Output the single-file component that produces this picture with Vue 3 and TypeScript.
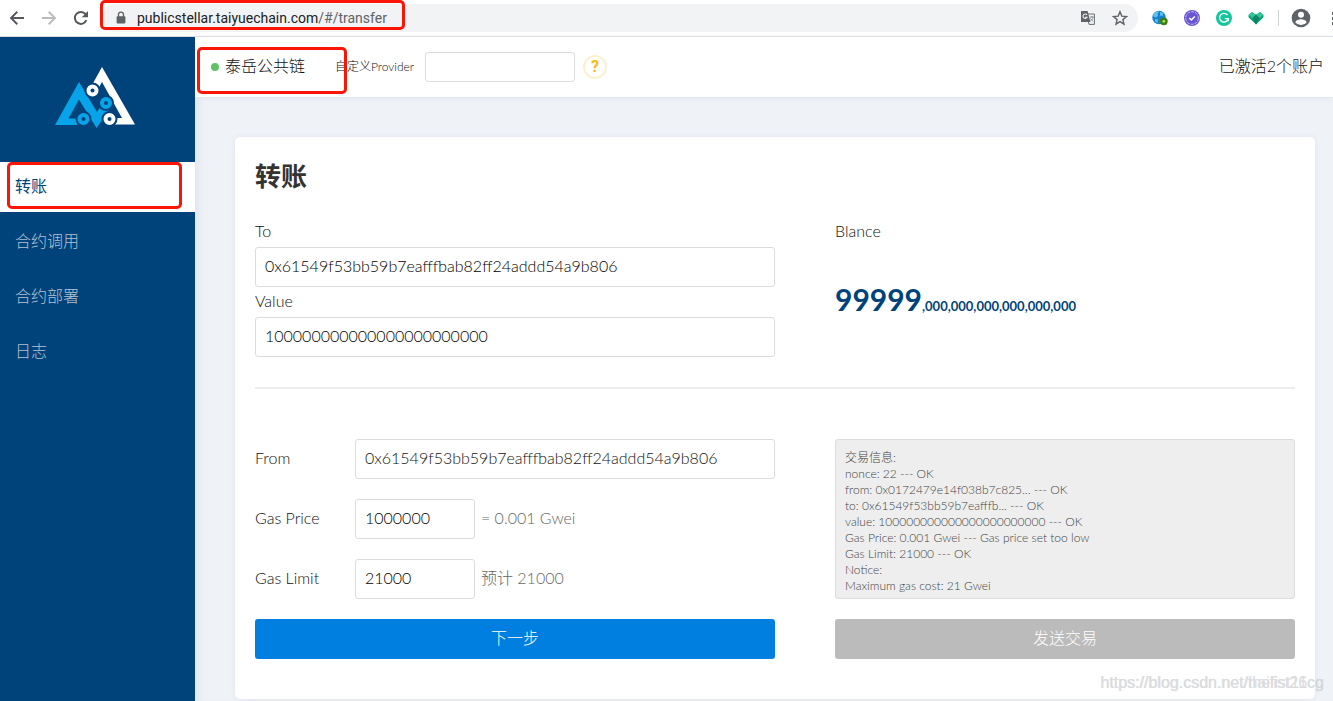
<script setup lang="ts">
import { ref } from 'vue'

interface NavItem {
  label: string
  active: boolean
}

const navItems: NavItem[] = [
  { label: '转账', active: true },
  { label: '合约调用', active: false },
  { label: '合约部署', active: false },
  { label: '日志', active: false },
]

const provider = ref('')
const to = ref('0x61549f53bb59b7eafffbab82ff24addd54a9b806')
const amount = ref('100000000000000000000000')
const from = ref('0x61549f53bb59b7eafffbab82ff24addd54a9b806')
const gasPrice = ref('1000000')
const gasLimit = ref('21000')

const infoLines: string[] = [
  '交易信息:',
  'nonce: 22 --- OK',
  'from: 0x0172479e14f038b7c825... --- OK',
  'to: 0x61549f53bb59b7eafffb... --- OK',
  'value: 100000000000000000000000 --- OK',
  'Gas Price: 0.001 Gwei --- Gas price set too low',
  'Gas Limit: 21000 --- OK',
  'Notice:',
  'Maximum gas cost: 21 Gwei',
]
</script>

<template>
  <div class="window">
    <div class="browser">
      <button class="tool" aria-label="Back">
        <svg width="16" height="16" viewBox="0 0 16 16"><path d="M15 8H2.5M8.3 1.8 2 8l6.3 6.2" fill="none" stroke="#55585d" stroke-width="1.9" /></svg>
      </button>
      <button class="tool" aria-label="Forward">
        <svg width="16" height="16" viewBox="0 0 16 16"><path d="M1 8h12.5M7.7 1.8 14 8l-6.3 6.2" fill="none" stroke="#b9bbbe" stroke-width="1.9" /></svg>
      </button>
      <button class="tool" aria-label="Reload">
        <svg width="16" height="16" viewBox="0 0 16 16"><path d="M13.4 10.2A6 6 0 1 1 12.6 4.2" fill="none" stroke="#55585d" stroke-width="2" /><path d="M15 1v6.2H8.8z" fill="#55585d" /></svg>
      </button>
      <div class="address">
        <svg class="lock" width="10" height="14" viewBox="0 0 10 14"><path d="M2.5 6V3.6a2.5 2.5 0 0 1 5 0V6" fill="none" stroke="#5f6368" stroke-width="1.3" /><rect x="0.6" y="5.2" width="8.8" height="7.4" rx="1" fill="#5f6368" /></svg>
        <span class="url">publicstellar.taiyuechain.com<span class="path">/#/transfer</span></span>
        <button class="tool" aria-label="Translate">
          <svg width="16" height="16" viewBox="0 0 16 16"><path d="M7 4h7.4v10.4H9z" fill="#f1f3f4" stroke="#6a6d72" stroke-width="1" /><path d="M1 1h6.6l2.8 11H1z" fill="#5f6368" /><path d="M7 4.9A2.2 2.2 0 1 0 7.1 7.3H5.2" fill="none" stroke="#f1f3f4" stroke-width="1.1" /><path d="M9.8 7h4M11.8 6v1M13 7c-.4 2-1.5 3.2-2.6 4M10.4 8.4c.5 1.1 1.6 2.2 2.8 2.8" fill="none" stroke="#85888c" stroke-width="0.9" /></svg>
        </button>
        <button class="tool" aria-label="Bookmark">
          <svg width="16" height="16" viewBox="0 0 16 16"><path d="m8 1.7 1.8 4.4 4.7.4-3.6 3.1 1.1 4.6L8 11.7l-4 2.5 1.1-4.6L1.5 6.5l4.7-.4z" fill="none" stroke="#5f6368" stroke-width="1.4" /></svg>
        </button>
      </div>
      <button class="tool" aria-label="Globe extension">
        <svg width="16" height="16" viewBox="0 0 16 16"><circle cx="7" cy="7.5" r="6.7" fill="#1583cf" /><path d="M2 3.5C4 1 6 1 7 1.5L5.5 4 6 6 3.5 7.5 1 6zM8 2l3.5 1-1 3-2.5-.5zM3 9l3 .5L5.500 13 3 11.500z" fill="#62c0ef" /><circle cx="11.8" cy="11.3" r="3.9" fill="#3b7e13" /><circle cx="11.8" cy="11.3" r="1.4" fill="#b7dc54" /></svg>
      </button>
      <button class="tool" aria-label="Badge extension">
        <svg width="16" height="16" viewBox="0 0 16 16"><circle cx="8" cy="8" r="8" fill="#6855cf" /><circle cx="8" cy="8" r="6.3" fill="none" stroke="#c8bff3" stroke-width="1" stroke-dasharray="3 1" /><path d="m5.300 8 2 2 3.500-3.600" fill="none" stroke="#fff" stroke-width="1.5" /></svg>
      </button>
      <button class="tool" aria-label="Grammar extension">
        <svg width="16" height="16" viewBox="0 0 16 16"><circle cx="8" cy="8" r="8" fill="#11c79b" /><path d="M11.500 5A4.400 4.400 0 1 0 12.300 8.700H8.800M12.300 8.700v2.600" fill="none" stroke="#fff" stroke-width="1.3" /></svg>
      </button>
      <button class="tool" aria-label="Heart extension">
        <svg width="16" height="16" viewBox="0 0 16 16"><path d="M.5 5 4 2l4 2.800L12 2l3.500 3v2.200L8 14.500.5 7.200z" fill="#08a67c" /><path d="M.5 5 4 2l4 2.800L4.500 8zM12 2l3.500 3-4 3L8 4.800z" fill="#35c398" /><path d="M4.500 8 8 4.800 11.500 8 8 14.500z" fill="#098663" /></svg>
      </button>
      <span class="divider"></span>
      <button class="tool profile" aria-label="Profile">
        <svg width="20" height="20" viewBox="0 0 20 20"><circle cx="10" cy="10" r="9.3" fill="#5f6368" /><circle cx="10" cy="6.8" r="3" fill="#fff" /><path d="M4.200 14.200c1-2 3.500-2.900 5.800-2.900s4.800.9 5.800 2.900A7.200 7.200 0 0 1 10 17a7.200 7.200 0 0 1-5.800-2.800z" fill="#fff" /></svg>
      </button>
      <button class="tool more" aria-label="Menu">
        <svg width="4" height="16" viewBox="0 0 4 16"><path d="M1 2h3v3H1zM1 7h3v3H1zM1 12h3v3H1z" fill="#5f6368" /></svg>
      </button>
      <span class="mark mark-url"></span>
    </div>

    <div class="app">
      <aside class="sidebar">
        <div class="logo">
          <svg width="80" height="62" viewBox="0 0 80 62">
            <path d="M24 15 42 45 49 34.500 57 39 41.500 61 24 32.500 13.500 51.500H22V58H0z" fill="#08a4ea" />
            <path d="M47 0 80 57.500H60V51H67L47 15 43 22 37 18z" fill="#fff" />
            <g fill="#fff" stroke="#00437b" stroke-width="2"><circle cx="37.5" cy="23.5" r="7" /><circle cx="54.5" cy="52" r="7" /></g>
            <g fill="#08a4ea" stroke="#00437b" stroke-width="2"><circle cx="51" cy="36" r="7" /><circle cx="28.5" cy="52" r="7" /></g>
            <g fill="#00437b"><circle cx="37.5" cy="23.5" r="2" /><circle cx="54.5" cy="52" r="2" /><circle cx="51" cy="36" r="2" /><circle cx="28.5" cy="52" r="2" /></g>
          </svg>
        </div>
        <nav class="nav">
          <a v-for="item in navItems" :key="item.label" href="#" :class="['nav-item', { active: item.active }]">
            {{ item.label }}<span v-if="item.active" class="mark mark-nav"></span>
          </a>
        </nav>
      </aside>

      <div class="content">
        <header class="topbar">
          <span class="dot"></span>
          <span class="chain">泰岳公共链</span>
          <label class="provider-label" for="provider">自定义Provider</label>
          <input id="provider" v-model="provider" class="provider" type="text" />
          <button class="help" aria-label="Help">?</button>
          <span class="accounts">已激活2个账户</span>
          <span class="mark mark-chain"></span>
        </header>

        <main class="card">
          <h1>转账</h1>
          <section class="columns">
            <div class="stack">
              <label for="to">To</label>
              <input id="to" v-model="to" type="text" />
              <label for="amount">Value</label>
              <input id="amount" v-model="amount" type="text" />
            </div>
            <div class="stack">
              <span class="caption">Blance</span>
              <p class="balance">99999<small>,000,000,000,000,000,000</small></p>
            </div>
          </section>
          <hr />
          <section class="columns">
            <form class="form" @submit.prevent>
              <div class="row">
                <label for="from">From</label>
                <input id="from" v-model="from" class="wide" type="text" />
              </div>
              <div class="row">
                <label for="gas-price">Gas Price</label>
                <input id="gas-price" v-model="gasPrice" type="text" />
                <span class="hint">= 0.001 Gwei</span>
              </div>
              <div class="row">
                <label for="gas-limit">Gas Limit</label>
                <input id="gas-limit" v-model="gasLimit" type="text" />
                <span class="hint">预计 21000</span>
              </div>
              <button class="action" type="submit">下一步</button>
            </form>
            <div class="form">
              <div class="info">
                <p v-for="line in infoLines" :key="line">{{ line }}</p>
              </div>
              <button class="action muted" type="button">发送交易</button>
            </div>
          </section>
        </main>
      </div>
    </div>
    <div class="watermark">
      <span>https://blog.csdn.net/thefist11cg</span>
      <span>https://blog.csdn.net/hailist26cg</span>
    </div>
  </div>
</template>

<style>
html,
body,
#app {
  height: 100%;
}

body {
  margin: 0;
  overflow: hidden;
}
</style>

<style scoped>
.window {
  display: flex;
  flex-direction: column;
  height: 100%;
  overflow: hidden;
  position: relative;
  font: 300 16px/30px Lato, "Noto Sans CJK SC", sans-serif;
  color: #111;
  background: #eff2f7;
}

.window *,
.window {
  box-sizing: border-box;
}

button {
  border: 0;
  padding: 0;
  background: none;
  font: inherit;
  color: inherit;
}

svg {
  display: block;
}

.browser {
  position: relative;
  display: flex;
  align-items: center;
  gap: 16px;
  height: 37px;
  flex: none;
  padding-left: 9px;
  background: #fff;
  border-bottom: 1px solid #d9dbdf;
  overflow: hidden;
}

.tool {
  flex: none;
}

.address {
  flex: 1;
  display: flex;
  align-items: center;
  gap: 16px;
  height: 28px;
  margin: 0 -2px 0 -3px;
  padding: 0 10px 0 14px;
  border-radius: 14px;
  background: #f1f3f4;
}

.lock {
  margin-right: -5px;
}

.url {
  flex: 1;
  font: 400 14px/20px Roboto, sans-serif;
  color: #202124;
}

.path {
  color: #5f6368;
}

.divider {
  width: 1px;
  height: 16px;
  margin: 0 -4px 0 -2px;
  background: #cfd1d4;
}

.more {
  margin: 0 -2px 0 4px;
}

.mark {
  position: absolute;
  border: 3px solid #fa1505;
  border-radius: 5px;
  pointer-events: none;
}

.mark-url {
  left: 100px;
  top: 0;
  width: 305px;
  height: 30px;
}

.mark-nav {
  left: 7px;
  top: 0;
  width: 175px;
  height: 47px;
}

.mark-chain {
  left: 2px;
  top: 10px;
  width: 150px;
  height: 47px;
}

.app {
  display: flex;
  flex: 1;
  min-height: 0;
}

.sidebar {
  position: relative;
  z-index: 1;
  width: 195px;
  flex: none;
  background: #00437b;
}

.logo {
  display: flex;
  align-items: center;
  justify-content: center;
  height: 125px;
  padding: 0 5px 4px 0;
}

.nav {
  display: flex;
  flex-direction: column;
  gap: 5px;
}

.nav-item {
  position: relative;
  padding: 9px 15px 11px;
  color: #b2c4d4;
  text-decoration: none;
}

.nav-item.active {
  font-weight: 400;
  color: #00437b;
  background: #fff;
}

.content {
  flex: 1;
  min-width: 0;
  box-shadow: inset 8px 0 10px -6px #dde2e9;
}

.topbar {
  position: relative;
  display: flex;
  align-items: center;
  height: 60px;
  padding: 0 9px 0 16px;
  background: #fff;
  box-shadow: 0 1px 5px #dfe3e9;
}

.dot {
  width: 8px;
  height: 8px;
  margin-right: 6px;
  border-radius: 50%;
  background: #5fc168;
}

.chain,
.accounts {
  padding-bottom: 2px;
}

.provider-label {
  margin: 0 11px 0 30px;
  font-size: 12px;
}

input {
  width: 100%;
  height: 40px;
  padding: 0 9px 3px;
  border: 1px solid #dcdcdc;
  border-radius: 3px;
  background: #fff;
  font: inherit;
  color: #000;
  outline: 0;
}

.provider {
  width: 150px;
  height: 30px;
}

.help {
  width: 24px;
  height: 24px;
  margin-left: 8px;
  border: 2px solid #fdf0cf;
  border-radius: 50%;
  font: 700 16px/20px Roboto, sans-serif;
  color: #fbb911;
}

.accounts {
  margin-left: auto;
}

.card {
  margin: 40px 18px 0 40px;
  padding: 20px 20px 40px;
  border-radius: 5px;
  background: #fff;
  box-shadow: 0 0 5px #dfe3e9;
}

h1 {
  margin: 0 0 22px;
  font-size: 26px;
  line-height: 38px;
  font-weight: 700;
  color: #333;
}

.columns {
  display: grid;
  grid-template-columns: 26fr 23fr;
  gap: 60px;
}

.stack {
  display: flex;
  flex-direction: column;
}

.stack label,
.caption {
  line-height: 28px;
  padding-bottom: 2px;
}

.balance {
  margin: 34px 0 0;
  font-size: 30px;
  line-height: 36px;
  font-weight: 700;
  color: #00437b;
}

.balance small {
  font-size: 13px;
}

hr {
  height: 2px;
  margin: 30px 0 50px;
  border: 0;
  background: #ececec;
}

.form {
  display: flex;
  flex-direction: column;
  gap: 20px;
}

.row {
  display: flex;
  align-items: center;
}

.row label {
  width: 100px;
  flex: none;
  padding-bottom: 2px;
}

.row input {
  width: 120px;
}

.row .wide {
  width: auto;
  flex: 1;
  color: #111;
}

.hint {
  margin-left: 6px;
  padding-bottom: 2px;
  color: #666;
}

.info {
  height: 160px;
  padding: 10px 9px;
  border: 1px solid #dcdcdc;
  border-radius: 3px;
  background: #eee;
  font-size: 12px;
  line-height: 16px;
  color: #444;
  overflow: hidden;
}

.info p {
  margin: 0;
}

.action {
  height: 40px;
  border-radius: 3px;
  padding-bottom: 2px;
  background: #007fe1;
  color: #fff;
}

.action.muted {
  background: #bbb;
}

.watermark {
  position: absolute;
  right: 9px;
  bottom: 8px;
  display: grid;
  justify-items: end;
  font: 400 16px/20px "Liberation Sans", sans-serif;
  color: #c4c6c9;
  opacity: 0.6;
}

.watermark span {
  grid-area: 1 / 1;
}
</style>
